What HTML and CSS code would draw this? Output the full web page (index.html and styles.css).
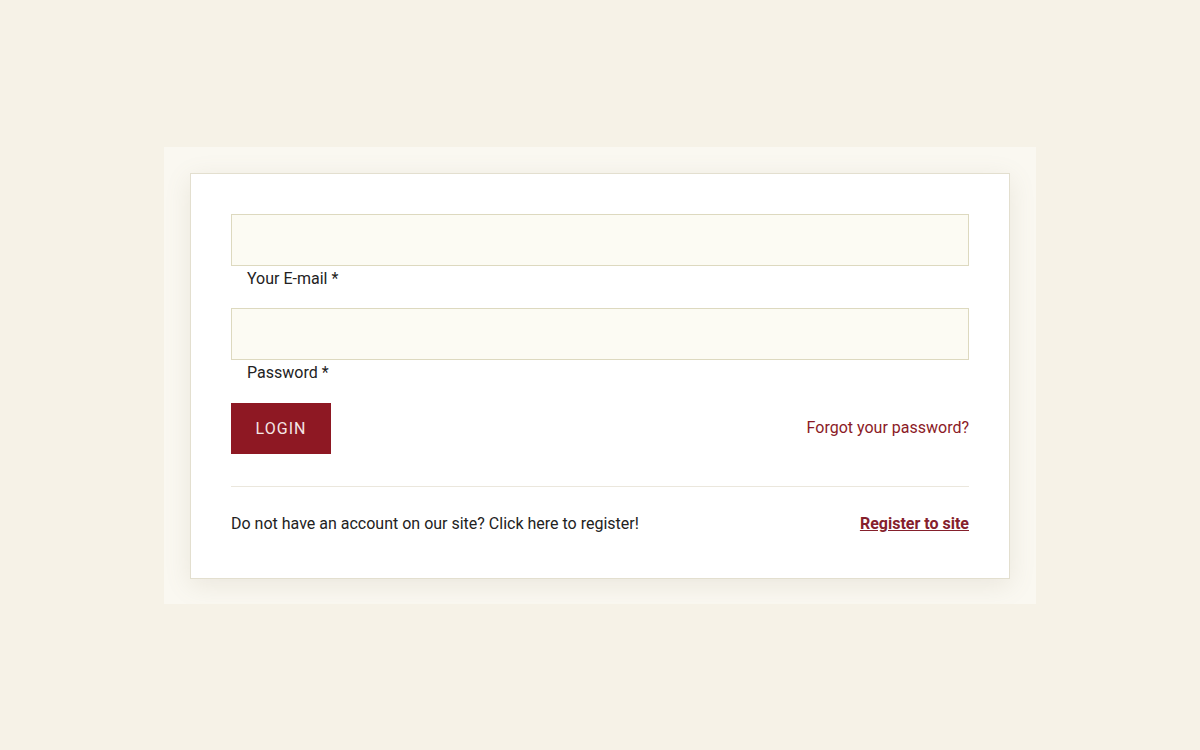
FILE: index.html
```html
<!doctype html>
<html lang="en">
	<head>
		<meta charset="UTF-8" />
		<title>Login</title>
		<link rel="stylesheet" href="styles.css">
	</head>
	<body>
		<section id="wrap">
			<div class="card">
				<form class="login">
					<div class="field">
						<input type="email" id="email" />
						<label for="email">Your E-mail *</label>
					</div>
					<div class="field">
						<input type="password" id="pass" />
						<label for="pass">Password *</label>
					</div>
					<div class="actions">
						<button type="button" class="btn">LOGIN</button>
						<a href="javascript:;" class="forgot">Forgot your password?</a>
					</div>
				</form>
				<div class="register">
					<p>Do not have an account on our site? Click here to register!</p>
					<a href="javascript:;">Register to site</a>
				</div>
			</div>
		</section>
	</body>
</html>
```

FILE: styles.css
```css
*{
	margin: 0;
	padding: 0;
	box-sizing: border-box;
}
body{
	background: #f6f2e7;
	font-family: Roboto, "Liberation Sans", sans-serif;
	font-size: 16px;
	color: #222;
	padding-top: 147px;
}
#wrap{
	width: 872px;
	margin: 0 auto;
	padding: 26px 26px 25px;
	background: #faf8f1;
	overflow: hidden;
}
.card{
	background: #fff;
	border: 1px solid #e3dfcf;
	padding: 40px 40px 41px;
	box-shadow: 0 6px 24px rgba(140, 130, 100, 0.14);
}
.field{
	margin-bottom: 17px;
}
.field input{
	display: block;
	width: 100%;
	height: 52px;
	background: #fcfbf3;
	border: 1px solid #ddd9bf;
	outline: none;
	font: inherit;
	padding: 0 15px;
}
.field label{
	display: block;
	line-height: 24px;
	padding: 1px 0 0 16px;
}
.actions{
	display: flex;
	justify-content: space-between;
	align-items: center;
	padding-top: 1px;
	padding-bottom: 32px;
	border-bottom: 1px solid #ebe7dd;
}
.btn{
	width: 100px;
	height: 51px;
	background: #8e1823;
	color: #f4e6e6;
	border: none;
	font: inherit;
	letter-spacing: 1px;
	cursor: pointer;
}
a{
	color: #8b1a26;
	text-decoration: none;
}
.forgot{
	margin-top: -2px;
}
.register{
	display: flex;
	justify-content: space-between;
	align-items: center;
	padding-top: 24px;
	line-height: 26px;
}
.register a{
	color: #85202c;
	font-weight: bold;
	text-decoration: underline;
}
```
